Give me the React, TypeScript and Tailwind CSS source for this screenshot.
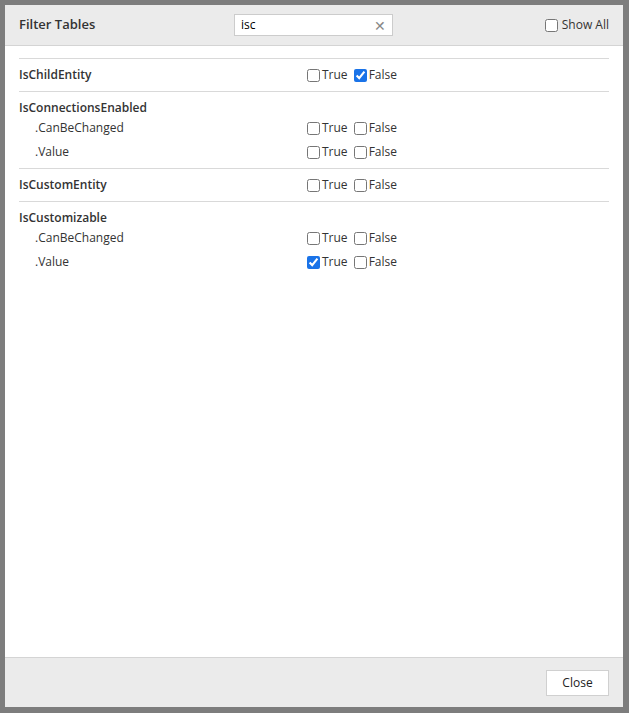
const rows: { name: string; sub?: { label: string; t: boolean; f: boolean }[]; t?: boolean; f?: boolean }[] = [
  { name: "IsChildEntity", t: false, f: true },
  { name: "IsConnectionsEnabled", sub: [{ label: ".CanBeChanged", t: false, f: false }, { label: ".Value", t: false, f: false }] },
  { name: "IsCustomEntity", t: false, f: false },
  { name: "IsCustomizable", sub: [{ label: ".CanBeChanged", t: false, f: false }, { label: ".Value", t: true, f: false }] },
];

function Pair({ t, f }: { t: boolean; f: boolean }) {
  return (
    <div className="flex items-center gap-[6px] text-[12px] text-[#333]">
      <label className="flex items-center gap-[2px]">
        <input type="checkbox" defaultChecked={t} className="m-0 h-[13px] w-[13px] accent-[#1a73e8]" />True
      </label>
      <label className="flex items-center gap-[2px]">
        <input type="checkbox" defaultChecked={f} className="m-0 h-[13px] w-[13px] accent-[#1a73e8]" />False
      </label>
    </div>
  );
}

export default function App() {
  return (
    <div className="h-[713px] w-[629px] bg-[#7d7d7d] p-[5px] pr-[6px] pb-[6px]" style={{ fontFamily: '"Open Sans", "Noto Sans", sans-serif' }}>
      <div className="flex h-full flex-col bg-white">
        <div className="flex h-[41px] items-center border-b border-[#d4d4d4] bg-[#ebebeb] px-[14px]">
          <div className="w-[215px] text-[13px] font-semibold text-[#333]">Filter Tables</div>
          <div className="flex h-[22px] w-[159px] items-center border border-[#ccc] bg-white px-[6px] text-[12px] text-black">
            <span className="flex-1">isc</span>
            <span className="text-[14px] text-[#888]">✕</span>
          </div>
          <label className="ml-auto flex items-center gap-[4px] text-[12px] text-[#333]">
            <input type="checkbox" className="m-0 h-[13px] w-[13px]" />Show All
          </label>
        </div>
        <div className="flex-1 px-[14px] pt-[12px]">
          {rows.map((r) => (
            <div key={r.name} className="border-t border-[#d9d9d9] py-1 text-[12px] text-[#333]">
              {r.sub ? (
                <>
                  <div className="flex h-[20px] items-center pt-[4px] font-semibold">{r.name}</div>
                  {r.sub.map((s) => (
                    <div key={s.label} className="flex h-6 items-center">
                      <div className="w-[288px] pl-[16px]">{s.label}</div>
                      <Pair t={s.t} f={s.f} />
                    </div>
                  ))}
                </>
              ) : (
                <div className="flex h-6 items-center">
                  <div className="w-[288px] font-semibold">{r.name}</div>
                  <Pair t={!!r.t} f={!!r.f} />
                </div>
              )}
            </div>
          ))}
        </div>
        <div className="flex h-[50px] items-center justify-end border-t border-[#d4d4d4] bg-[#ebebeb] px-[14px]">
          <button className="h-[26px] w-[63px] border border-[#d0d0d0] bg-white text-[12px] text-[#222]">Close</button>
        </div>
      </div>
    </div>
  );
}
